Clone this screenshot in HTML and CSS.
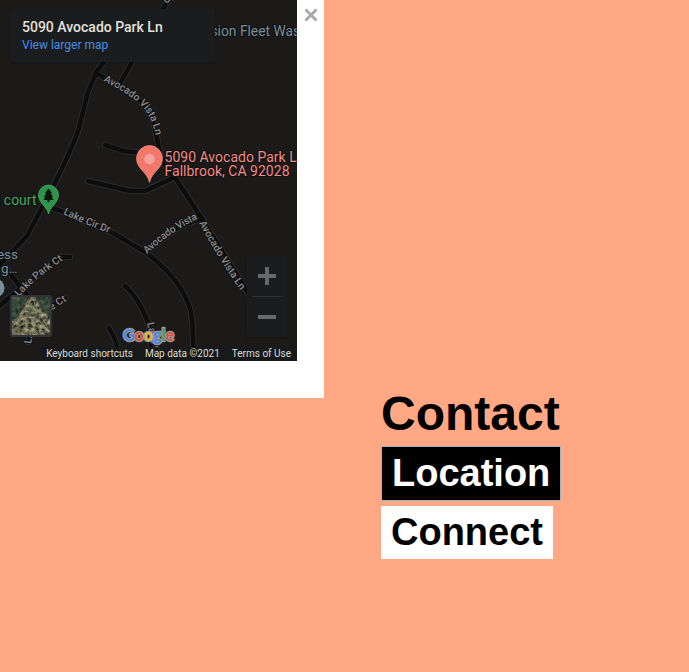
FILE: index.html
```html
<!DOCTYPE html>
<html lang="en">
<head>
<meta charset="utf-8">
<title>Contact</title>
<link rel="stylesheet" href="styles.css">
</head>
<body>
<main class="page">
  <section class="popup">
    <div class="map">
      <svg class="canvas" viewBox="0 0 297 361" width="297" height="361">
        <defs>
          <g id="roads">
            <path d="M176 -6L166 4L140 47L121 82M122 39L97 71L88 92L79 128Q75 142 54 185L27 236L-4 269"/>
            <path d="M96 73L130 93Q150 107 155 128L160 153Q165 169 176 179L202 219L249 294"/>
            <path d="M48 206Q80 218 113 233L145 252Q183 280 191 312Q194 330 193 365"/>
            <path d="M105 145L124 151L150 154"/>
            <path d="M88 181L130 191L145 191L173 178"/>
            <path d="M146 252L177 228L202 218"/>
            <path d="M70 257L59 257L15 293L-4 309M8 271L31 300"/>
            <path d="M125 286Q139 298 149 325L153 365M109 328Q119 342 119 365"/>
            <path d="M65 298L44 311L28 342"/>
          </g>
          <path id="vista-a" d="M103 81Q136 97 146 111Q154 123 156 138"/>
          <path id="lake-cir" d="M63 214Q88 226 118 236"/>
          <path id="vista-b" d="M147 254Q173 229 206 215"/>
          <path id="vista-c" d="M199 223Q219 260 245 297"/>
          <path id="lake-park" d="M19 297Q38 275 70 256"/>
          <path id="lake-ct" d="M31 344Q33 317 76 296"/>
        </defs>
        <rect width="297" height="361" class="land"/>
        <use href="#roads" class="road-edge"/>
        <use href="#roads" class="road"/>
        <g class="street">
          <text><textPath href="#vista-a">Avocado Vista Ln</textPath></text>
          <text><textPath href="#lake-cir">Lake Cir Dr</textPath></text>
          <text><textPath href="#vista-b" textLength="62">Avocado Vista</textPath></text>
          <text><textPath href="#vista-c">Avocado Vista Ln</textPath></text>
          <text><textPath href="#lake-park">Lake Park Ct</textPath></text>
          <text><textPath href="#lake-ct">Lake Lake Ct</textPath></text>
          <text transform="translate(147 323) rotate(78)">Lake Cir Dr</text>
          <text transform="translate(167 4) rotate(-48)">d</text>
        </g>
        <g class="place">
          <text x="210.500" y="36" class="fleet">sion Fleet Wash</text>
          <text x="18" y="259" text-anchor="end">ess</text>
          <text x="17.500" y="273" text-anchor="end">g…</text>
          <circle cx="-5" cy="288" r="9.500"/>
        </g>
        <text class="park" x="36.500" y="205" text-anchor="end">l court</text>
        <path class="park-pin" d="M48.500 214C47.500 207 38.500 203 38.500 195A10 10 0 0 1 58.500 195C58.500 203 49.500 207 48.500 214Z"/>
        <path class="tree" d="M48.500 188.500L52 193H50.800L53 197H51.800L53.500 200H49.500V202H47.500V200H43.500L45.200 197H44L46.200 193H45Z"/>
        <path class="pin" d="M149.500 182.500C147.500 172 136.500 169 136.500 158.500A13 13 0 0 1 162.500 158.500C162.500 169 151.500 172 149.500 182.500Z"/>
        <circle class="pin-dot" cx="149.500" cy="159" r="5.300"/>
        <g class="address">
          <text x="164.500" y="162" textLength="140">5090 Avocado Park Ln</text>
          <text x="164.500" y="176" textLength="125">Fallbrook, CA 92028</text>
        </g>
        <g class="google">
          <text x="123" y="341" textLength="51" lengthAdjust="spacingAndGlyphs"><tspan class="b">G</tspan><tspan class="r">o</tspan><tspan class="y">o</tspan><tspan class="b">g</tspan><tspan class="g">l</tspan><tspan class="r">e</tspan></text>
        </g>
      </svg>
      <div class="info"><strong>5090 Avocado Park Ln</strong><a>View larger map</a></div>
      <div class="satellite">
        <svg viewBox="0 0 38 38" width="38" height="38">
          <defs>
            <filter id="terrain" x="0" y="0" width="1" height="1" color-interpolation-filters="sRGB">
              <feTurbulence type="fractalNoise" baseFrequency=".25" numOctaves="4" seed="8"/>
              <feColorMatrix values="1 0 0 0 -.1  .85 .1 0 0 -.08  .7 .1 0 0 -.09  0 0 0 0 1"/>
            </filter>
          </defs>
          <rect width="38" height="38" filter="url(#terrain)"/>
          <path class="grove" d="M0 0H17L12 11L2 24H0ZM24 0H38V19L30 15Z"/>
          <path class="trail" d="M20 0L14 13L2 28M20 0L27 16L36 31M11 14L25 16M7 24Q18 15 31 27M5 31Q18 19 31 34M10 35Q17 25 26 37"/>
        </svg>
      </div>
      <div class="zoom">
        <svg viewBox="0 0 40 82" width="40" height="82">
          <path class="sign" d="M11 21H29M20 12V30M11 62H29"/>
          <path class="rule" d="M5 41.500H35"/>
        </svg>
      </div>
      <div class="legal"><span>Keyboard shortcuts</span><span>Map data ©2021</span><span>Terms of Use</span></div>
    </div>
    <svg class="close" viewBox="0 0 14 14" width="14" height="14"><path d="M1.500 1.500L12.500 12.500M12.500 1.500L1.500 12.500"/></svg>
  </section>
  <section class="menu">
    <h1>Contact</h1>
    <a class="item active">Location</a>
    <a class="item">Connect</a>
  </section>
</main>
</body>
</html>
```
FILE: styles.css
```css
* { box-sizing: border-box; }
body { margin: 0; background: #ffa883; font-family: "Liberation Sans", Arial, sans-serif; }
.page { display: flex; height: 672px; overflow: hidden; }
.popup { display: flex; align-items: flex-start; width: 324px; height: 398px; background: #fff; flex: none; }
.map { position: relative; width: 297px; height: 361px; overflow: hidden; flex: none; font-family: Roboto, sans-serif; }
.canvas { display: block; }
.close { margin: 8px 0 0 6.5px; fill: none; stroke: #aaa; stroke-width: 3; }
.land { fill: #1b1a18; }
.road, .road-edge { fill: none; stroke-linecap: round; stroke-linejoin: round; }
.road-edge { stroke: #292c2f; stroke-width: 6.5; }
.road { stroke: #0d0d0d; stroke-width: 4.5; }
.canvas text { paint-order: stroke; stroke: #111; stroke-width: 2px; stroke-linejoin: round; }
.street { font-size: 10.2px; font-weight: 500; fill: #8a8c8e; }
.place { font-size: 13.5px; fill: #78909c; }
.fleet { font-size: 13.8px; }
.park { font-size: 14px; fill: #45a764; }
.park-pin { fill: #2b9549; stroke: #54ad6c; stroke-width: .7; }
.tree { fill: #10140f; }
.pin { fill: #f47869; stroke: #f99b8e; stroke-width: .6; }
.pin-dot { fill: #f5a19c; }
.address { font-size: 14px; fill: #f28b88; }
.canvas .google text { font-family: Lato, sans-serif; font-size: 17.5px; font-weight: 700; stroke: #999; stroke-width: 2.4px; }
.b { fill: #4d83e6; }
.r { fill: #d95045; }
.y { fill: #e8b52b; }
.g { fill: #429f57; }
.info { position: absolute; left: 10px; top: 9px; width: 205px; height: 53px; padding: 10px 12px; background: #1a1c1e; border-radius: 2px; box-shadow: 0 1px 2px #0003; display: flex; flex-direction: column; }
.info strong { color: #e3e0db; font-size: 14px; font-weight: 500; line-height: 17px; white-space: nowrap; }
.info a { color: #4690e2; font-size: 12px; line-height: 18px; }
.satellite { position: absolute; left: 10px; top: 295px; width: 42px; height: 42px; border: 2px solid #303438; border-radius: 2px; }
.satellite svg { display: block; }
.grove { fill: #17342b; opacity: .6; }
.trail { fill: none; stroke: #a6a078; stroke-width: .9; opacity: .65; }
.zoom { position: absolute; left: 247px; top: 255px; width: 40px; height: 82px; background: #1a1c1e; border-radius: 2px; box-shadow: 0 1px 2px #0003; }
.zoom svg { display: block; }
.sign { stroke: #686868; stroke-width: 4; }
.rule { stroke: #303335; }
.legal { position: absolute; right: 0; bottom: 0; height: 14px; display: flex; gap: 1px; font-size: 10px; line-height: 14px; color: #dedbd6; }
.legal span { padding: 0 6px 0 5px; background: #171a1bdd; white-space: nowrap; }
.legal span:last-child { padding-right: 6px; }
.menu { display: flex; flex-direction: column; align-items: flex-start; margin: 386px 0 0 57px; }
.menu h1 { margin: 0; font-size: 48px; line-height: 55px; }
.item { margin-top: 5px; padding: 5px 10px; font-size: 38px; font-weight: bold; line-height: 43px; background: #fff; color: #000; }
.item.active { border: 1px solid #a3b6bd; background: #000; color: #fff; }
```
